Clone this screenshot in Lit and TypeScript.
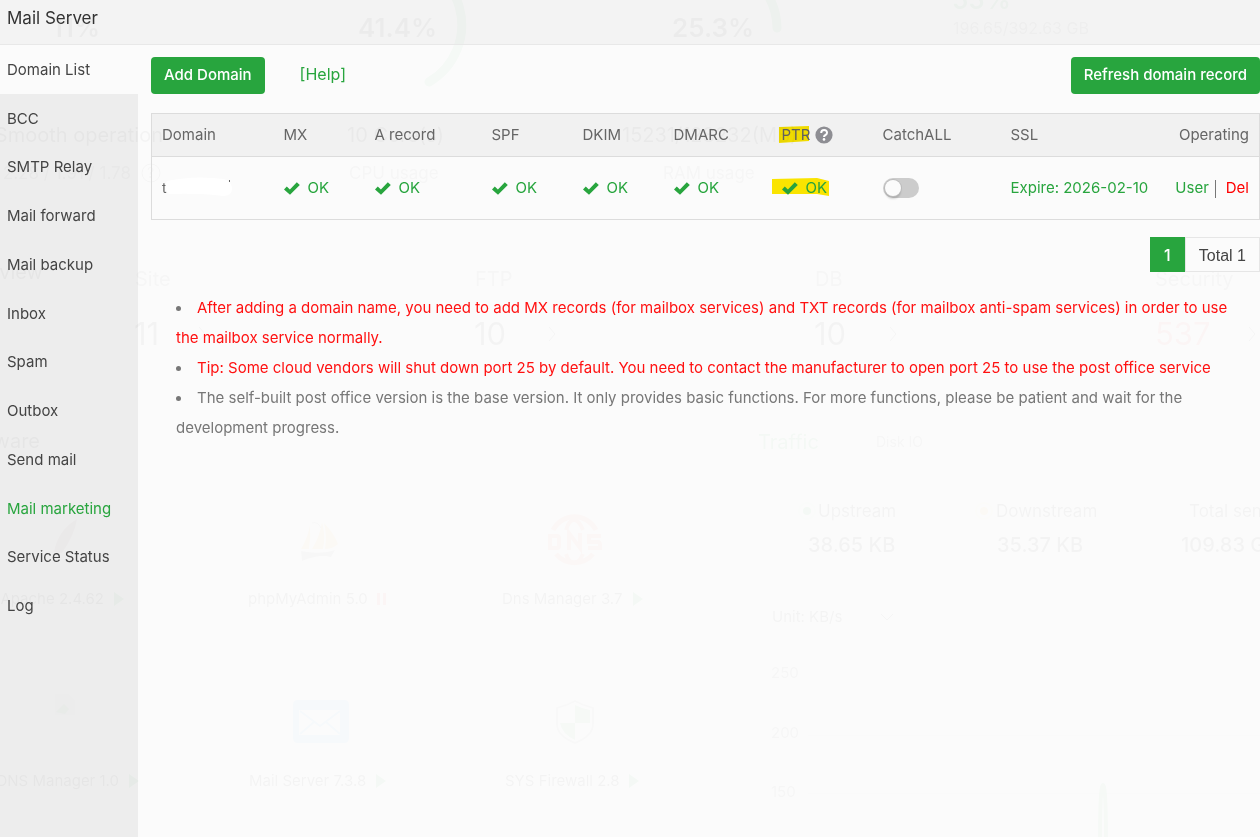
import { LitElement, html, css, svg } from "lit";
import { customElement, state } from "lit/decorators.js";

const MENU = [
  "Domain List", "BCC", "SMTP Relay", "Mail forward", "Mail backup", "Inbox",
  "Spam", "Outbox", "Send mail", "Mail marketing", "Service Status", "Log",
];

const check = html`<svg class="check" viewBox="0 0 16 13" aria-hidden="true">
  <path d="M0 7.4 2.8 4.6 5.9 7.4 12.8 0.3 15.8 3 6 12.8z" fill="currentColor"></path>
</svg>`;

/* Dashboard that shows faintly through the translucent dialog. */
@customElement("dashboard-backdrop")
class DashboardBackdrop extends LitElement {
  static styles = css`
    :host { display: block; overflow: hidden; height: 0; min-height: 100%; background: #fff; }
    svg { display: block; overflow: visible; font-family: Inter, "Liberation Sans", sans-serif; fill: #444; }
    .s14 { font-size: 14px; }
    .s15 { font-size: 15px; }
    .s16 { font-size: 16px; }
    .s17 { font-size: 17px; }
    .s20 { font-size: 20px; }
    .big { font-size: 31px; }
    .pct { font-size: 26px; font-weight: 600; }
    .mid { font-weight: 500; }
    .green { fill: #20a53a; opacity: .8; }
    .red { fill: #ef0808; opacity: .6; }
    .line { fill: none; stroke: #666; stroke-width: 1; }
    .arc { fill: none; stroke: #20a53a; stroke-width: 9; stroke-linecap: round; opacity: .7; }
    .icon { opacity: .6; }
    .end { text-anchor: end; }
    .mute { fill: #777; }
  `;

  render() {
    const play = (x: number, y: number) => svg`<path class="green" d="M${x} ${y}v14l10-7z"></path>`;
    const chev = (x: number) => svg`<path class="line" stroke-width="2" d="M${x} 327l6 7-6 7"></path>`;
    return html`<svg width="1260" height="837" viewBox="0 0 1260 837" aria-hidden="true">
      <text class="pct end" x="100" y="37">11%</text>
      <text class="pct" x="358" y="37">41.4%</text>
      <text class="pct" x="672" y="37">25.3%</text>
      <text class="pct green" x="952" y="9">55%</text>
      <text class="s16 mute" x="953" y="34">196.65/392.63 GB</text>
      <path class="arc" d="M395-41a66 66 0 0 1 34 123"></path>
      <path class="arc" d="M711-37a66 66 0 0 1 66 65"></path>

      <text class="s20 end" x="163" y="142">Smooth operation</text>
      <text class="s17 end mute" x="131" y="179">2.28 / 1.91 / 1.78</text>
      <circle class="line" cx="151" cy="173" r="9"></circle>
      <text class="s14 mute" x="147" y="178">?</text>
      <text class="s20" x="347" y="142">10 Core(s)</text>
      <text class="s17 mute" x="349" y="179">CPU usage</text>
      <text class="s20" x="622" y="142">15231/128232(MB)</text>
      <text class="s17 mute" x="663" y="179">RAM usage</text>

      <text class="s20 end" x="43" y="279">Overview</text>
      <text class="s20 mute" x="135" y="286">Site</text>
      <text class="s20 mute" x="475" y="286">FTP</text>
      <text class="s20 mute" x="815" y="286">DB</text>
      <text class="s20 mute" x="1155" y="286">Security</text>
      <text class="big" x="134" y="345">11</text>
      <text class="big" x="474" y="345">10</text>
      <text class="big" x="814" y="345">10</text>
      <text class="big red" x="1155" y="345">537</text>
      ${chev(199)}${chev(549)}${chev(890)}${chev(1249)}

      <text class="s20 end" x="40" y="448">Software</text>
      <text class="s20 green" x="758" y="449">Traffic</text>
      <text class="s14 mute" x="876" y="447">Disk IO</text>
      <circle class="green" cx="807" cy="511" r="4"></circle>
      <circle cx="807" cy="511" r="8" fill="none" stroke="#20a53a" stroke-opacity=".2" stroke-width="2"></circle>
      <text class="s17" x="818" y="517">Upstream</text>
      <circle class="icon" cx="984" cy="511" r="4" fill="#ffa500"></circle>
      <circle cx="984" cy="511" r="8" fill="none" stroke="#ffa500" stroke-opacity=".2" stroke-width="2"></circle>
      <text class="s17" x="996" y="517">Downstream</text>
      <text class="s17" x="1189" y="517">Total sent</text>
      <text class="s20 mid" x="808" y="552">38.65 KB</text>
      <text class="s20 mid" x="997" y="552">35.37 KB</text>
      <text class="s20 mid" x="1181" y="552">109.83 GB</text>
      <text class="s15" x="772" y="622">Unit: KB/s</text>
      <path class="line" d="M881 614l6 6 6-6"></path>
      <text class="s15 mute" x="771" y="678">250</text>
      <text class="s15 mute" x="771" y="738">200</text>
      <text class="s15 mute" x="771" y="797">150</text>
      <path d="M808 735h452v1H808zM808 793h452v1H808z" fill="#ddd"></path>
      <path class="icon" d="M1100 842Q1100 785 1103 785T1106 842" fill="none" stroke="#20a53a" stroke-width="4"></path>

      <g class="icon">
        <path d="M54 552Q58 530 77 519Q75 534 62 553z" fill="#8a4560"></path>
        <path d="M301 549q7-12 9-24 1 12-1 24zM312 549q8-13 10-27 4 14 1 27zM325 549q2-14-1-26 10 10 14 21-5 5-13 5z" fill="#f89c0e"></path>
        <path d="M301 551q20 4 34-1l-4 7q-12-3-29 4z" fill="#555"></path>
        <path d="M312 523q6-2 9 5" class="line"></path>
        <g fill="none" stroke="#f0522f" stroke-width="5">
          <path d="M553 530a24 24 0 0 1 43 0M556 554a24 24 0 0 0 37 0"></path>
          <path d="M566 530q3-10 8-10t9 10M566 554q3 9 8 9t9-9" stroke-width="4"></path>
          <path d="M550 536h7q2 0 2 2v8q0 2-2 2h-7zM569 550v-17l11 15v-15M601 536h-12v6h9q2 0 2 3v3h-12" stroke-width="4"></path>
        </g>
        <path d="M55 694h14l6 6v15H55z" fill="#bbc"></path>
        <path d="M56 712l8-8 5 5-4 5z" fill="#20a53a"></path>
        <path fill-rule="evenodd" d="M298 700h46q5 0 5 5v33q0 5-5 5h-46q-5 0-5-5v-33q0-5 5-5zM299 710v25h41v-25z" fill="#20a0ff"></path>
        <path d="M300 711l20 15 20-15M300 734l14-12M340 734l-14-12" fill="none" stroke="#20a0ff" stroke-width="2"></path>
        <path d="M575 701q9 5 18 7v16q0 12-18 19-18-7-18-19v-16q9-2 18-7z" fill="none" stroke="#888" stroke-width="2"></path>
        <path d="M575 705q8 4 15 5v13h-15zM575 723v17q-13-6-15-17z" fill="#20a53a"></path>
      </g>

      <text class="s15 end" x="104" y="604">Apache 2.4.62</text>${play(114, 592)}
      <text class="s15" x="248" y="604">phpMyAdmin 5.0</text>
      <path class="red" d="M377 593h3v12h-3zM383 593h3v12h-3z"></path>
      <text class="s15" x="502" y="604">Dns Manager 3.7</text>${play(633, 592)}
      <text class="s15 end" x="119" y="786">DNS Manager 1.0</text>${play(129, 774)}
      <text class="s15" x="249" y="786">Mail Server 7.3.8</text>${play(376, 774)}
      <text class="s15" x="505" y="786">SYS Firewall 2.8</text>${play(629, 774)}
    </svg>`;
  }
}

@customElement("app-root")
class AppRoot extends LitElement {
  @state() private active = "Domain List";

  static styles = css`
    :host {
      display: grid;
      grid-template: minmax(100vh, auto) / minmax(0, 1fr);
      font: 15px/20px Inter, "Liberation Sans", sans-serif;
      color: #666;
    }
    * { box-sizing: border-box; }
    button, input { font: inherit; }
    a { color: #28a53e; text-decoration: none; }
    dashboard-backdrop, .dialog { grid-area: 1 / 1; }
    .dialog { display: grid; grid-template: 45px 1fr / 138px minmax(0, 1fr); position: relative; }
    .title {
      grid-column: 1 / -1; margin: 0; padding: 6px 7px 0; font-size: 17px; line-height: 24px;
      font-weight: 400; color: #333; background: rgba(243, 243, 243, .96); border-bottom: 1px solid #e8e8e8;
    }
    .side { background: rgba(236, 236, 236, .96); }
    .menu { margin: 0; padding: 0; list-style: none; display: grid; grid-template-rows: repeat(12, 1fr); height: 585px; }
    .item {
      width: 100%; height: 100%; padding: 1px 7px 0; border: 0; background: none; text-align: left;
      color: #444; cursor: pointer;
    }
    .item.on { background: #fbfbfb; }
    .item.hot { color: #28a53e; }
    .main { background: rgba(251, 251, 251, .96); padding: 12px 0 0 13px; }
    .bar { display: flex; align-items: flex-start; }
    .btn {
      height: 37px; padding: 0 13px 2px; border: 0; border-radius: 4px; background: #28a53e; color: #fff;
      font-weight: 500; cursor: pointer;
    }
    .help { margin: 7px auto 0 35px; font-size: 16px; }
    table {
      width: 100%; margin-top: 19px; border-collapse: collapse; table-layout: fixed; border: 1px solid #dcdcdc;
    }
    th { height: 43px; padding: 0 10px; text-align: left; font-weight: 400; background: rgba(0, 0, 0, .04); border-bottom: 1px solid #dcdcdc; }
    td { height: 63px; padding: 0 10px; white-space: nowrap; }
    th:last-child, td:last-child { text-align: right; padding-left: 0; }
    .w91 { width: 91px; }
    .w101 { width: 101px; }
    .w108 { width: 108px; }
    .w117 { width: 117px; }
    .w122 { width: 122px; }
    .w128 { width: 128px; }
    .w160 { width: 160px; }
    .ok { display: flex; width: max-content; align-items: center; gap: 8px; color: #28a53e; }
    .check { width: 16px; height: 13px; }
    .ptr { display: flex; align-items: center; gap: 5px; }
    .tip { width: 18px; height: 18px; }
    .marked { position: relative; mix-blend-mode: multiply; }
    .marker { position: absolute; z-index: -1; fill: #fee800; }
    .marker.head { left: -3px; top: 1px; width: 30px; height: 17px; }
    .marker.cell { left: -10px; top: 0; width: 57px; height: 18px; }
    .name { position: relative; font-size: 14px; }
    .blot { position: absolute; left: 2px; top: -2px; width: 68px; height: 20px; fill: #fff; }
    .switch {
      appearance: none; display: block; width: 36px; height: 20px; margin: 0; padding: 2px; border-radius: 10px;
      background: #ccc; cursor: pointer;
    }
    .switch::before {
      content: ""; display: block; width: 16px; height: 16px; border-radius: 50%; background: #fbfbfb;
      box-shadow: 0 0 0 1px #bbb, 0 3px 2px rgba(0, 0, 0, .15);
    }
    .switch:checked { background: #28a53e; }
    .switch:checked::before { margin-left: auto; }
    .sep { display: inline-block; width: 1px; height: 18px; margin: 0 10px 0 6px; background: #777; vertical-align: middle; }
    .del { color: #f00; }
    .pager { display: flex; justify-content: flex-end; margin-top: 17px; font-size: 16px; line-height: 35px; text-align: center; }
    .page { width: 35px; height: 35px; padding: 1px 0 0; border: 0; background: #28a53e; color: #fff; font-weight: 500; }
    .total { padding: 0 13px; border: 1px solid #e6e6e6; line-height: 35px; height: 35px; color: #444; font-family: "Liberation Sans", sans-serif; }
    .notes { margin: 21px 0 0; padding: 0 20px 0 25px; list-style: none; line-height: 30px; color: #777; }
    .notes li::before {
      content: ""; display: inline-block; width: 5px; height: 5px; margin-right: 16px; border-radius: 50%;
      background: #777; vertical-align: middle;
    }
    .warn { color: #f11; }
  `;

  render() {
    const ok = html`<span class="ok">${check}OK</span>`;
    return html`
      <dashboard-backdrop></dashboard-backdrop>
      <div class="dialog">
        <h1 class="title">Mail Server</h1>
        <nav class="side">
          <ul class="menu">
            ${MENU.map((m) => html`<li><button
              class="item ${m === this.active ? "on" : ""} ${m === "Mail marketing" ? "hot" : ""}"
              @click=${() => (this.active = m)}>${m}</button></li>`)}
          </ul>
        </nav>
        <main class="main">
          <div class="bar">
            <button class="btn">Add Domain</button>
            <a class="help" href="#help">[Help]</a>
            <button class="btn">Refresh domain record</button>
          </div>
          <table>
            <thead>
              <tr>
                <th class="w122">Domain</th>
                <th class="w91">MX</th>
                <th class="w117">A record</th>
                <th class="w91">SPF</th>
                <th class="w91">DKIM</th>
                <th class="w108">DMARC</th>
                <th class="w101"><span class="ptr"><span class="marked">
                  <svg class="marker head" viewBox="0 0 30 17" aria-hidden="true"><path d="M0 1 30 0v15L0 17z"></path></svg>PTR</span>
                  <svg class="tip" viewBox="0 0 18 18" aria-hidden="true">
                    <circle cx="9" cy="9" r="8.6" fill="#8e8e93"></circle>
                    <path d="M6.2 7q0-2.9 2.9-2.9T12 6.8q0 1.4-1.5 2.2T9 11" fill="none" stroke="#fff" stroke-width="2"></path>
                    <circle cx="9" cy="13.4" r="1.3" fill="#fff"></circle>
                  </svg></span></th>
                <th class="w128">CatchALL</th>
                <th class="w160">SSL</th>
                <th>Operating</th>
              </tr>
            </thead>
            <tbody>
              <tr>
                <td><span class="name">t<svg class="blot" viewBox="0 0 68 20" aria-hidden="true">
                  <path d="M3 4Q30-2 60 2q8 3 8 10t-9 7Q38 16 5 17-1 11 3 4z"></path>
                  <path d="M65 3h1v2h-1z" fill="#666"></path></svg></span></td>
                <td>${ok}</td>
                <td>${ok}</td>
                <td>${ok}</td>
                <td>${ok}</td>
                <td>${ok}</td>
                <td><span class="ok marked">
                  <svg class="marker cell" viewBox="0 0 57 18" aria-hidden="true"><path d="M0 1 45 0l12 3v15l-12-2H0z"></path></svg>
                  ${check}OK</span></td>
                <td><input class="switch" type="checkbox" role="switch" aria-label="CatchALL" /></td>
                <td><a href="#ssl">Expire: 2026-02-10</a></td>
                <td><a href="#user">User</a><span class="sep"></span><a class="del" href="#del">Del</a></td>
              </tr>
            </tbody>
          </table>
          <div class="pager"><button class="page">1</button><span class="total">Total 1</span></div>
          <ul class="notes">
            <li><span class="warn">After adding a domain name, you need to add MX records (for mailbox services) and TXT records (for mailbox anti-spam services) in order to use the mailbox service normally.</span></li>
            <li><span class="warn">Tip: Some cloud vendors will shut down port 25 by default. You need to contact the manufacturer to open port 25 to use the post office service</span></li>
            <li>The self-built post office version is the base version. It only provides basic functions. For more functions, please be patient and wait for the development progress.</li>
          </ul>
        </main>
      </div>
    `;
  }
}
